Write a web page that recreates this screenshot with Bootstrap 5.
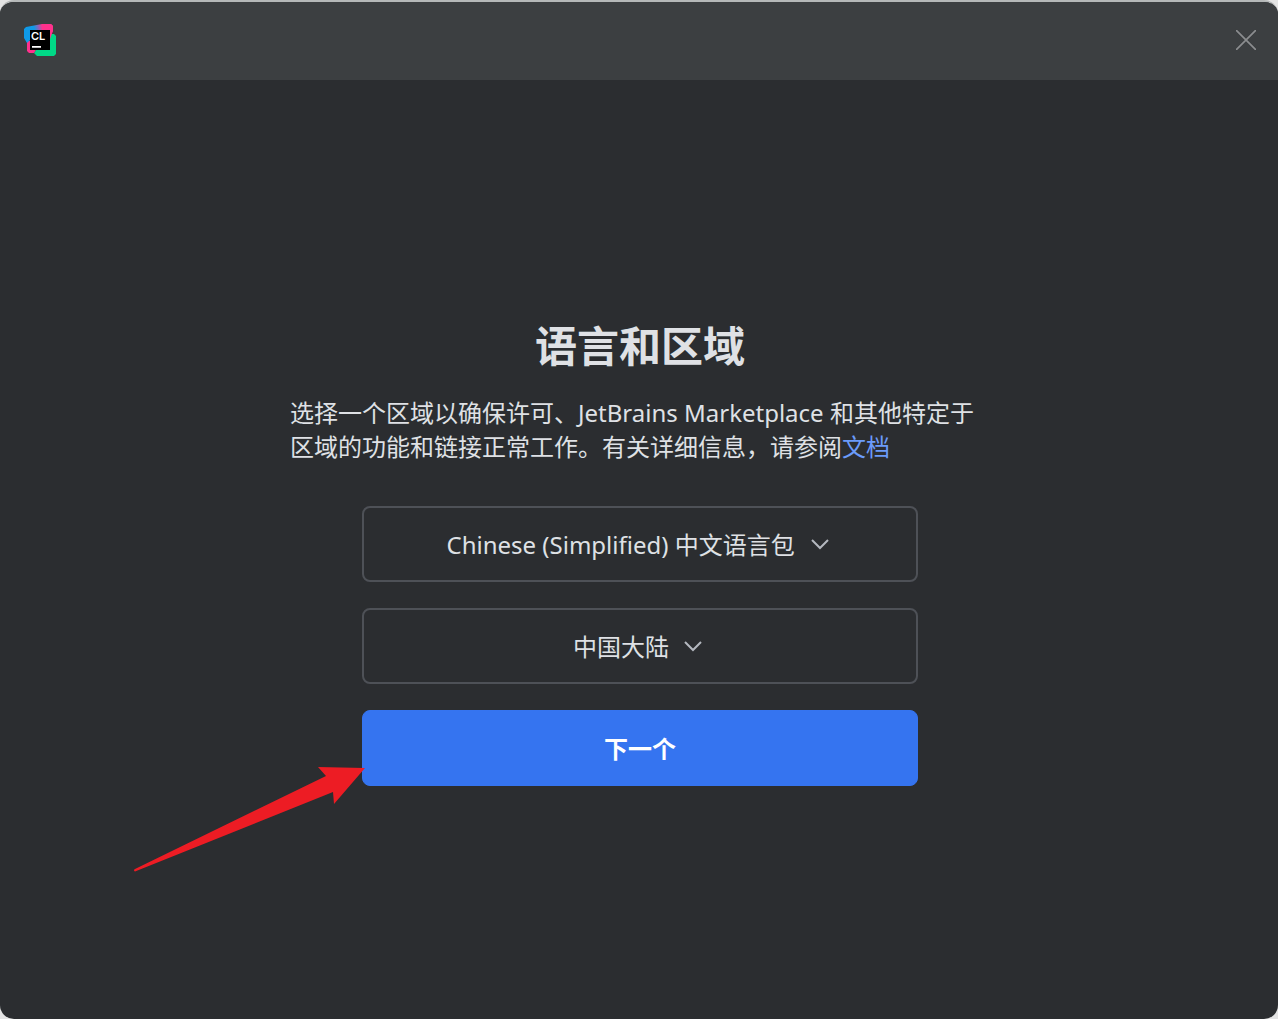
<!DOCTYPE html>
<html lang="zh-CN" data-bs-theme="dark">
<head>
<meta charset="utf-8">
<meta name="viewport" content="width=device-width, initial-scale=1">
<title>CLion</title>
<link href="https://cdn.jsdelivr.net/npm/bootstrap@5.3.0/dist/css/bootstrap.min.css" rel="stylesheet">
<style>
body { background: #e4e4e4; color: #dfe1e5; font-family: "Noto Sans", "Noto Sans CJK SC", sans-serif; font-size: 24px; }
.app-window { background: #2b2d30; border-top: 2px solid #b5b8b8; border-radius: 14px; }
.title-strip { background: #3c3f41; height: 78px; padding: 0 22px 2px 24px; }
.close-btn { color: #8b8d8f; line-height: 0; }
.logo-letters { font: 600 11px Inter, sans-serif; }
.welcome { padding-left: 2px; }
.page-title { font-size: 42px; line-height: 66px; margin-bottom: 17px; color: #dfe1e5; }
.intro-text { width: 100%; max-width: 700px; line-height: 34px; margin-bottom: 42px; }
.intro-text a { color: #6b9bfa; }
.choices { width: 100%; max-width: 556px; gap: 26px; }
.choice-box { height: 76px; border: 2px solid #4e5157; border-radius: 8px; }
.choice-box .form-select {
  color: #dfe1e5; font-size: 24px; height: 72px; padding: 2px 38px 0 0;
  background: transparent url("data:image/svg+xml,%3Csvg xmlns='http://www.w3.org/2000/svg' width='18' height='12' fill='none' stroke='%23b4b8bf' stroke-width='2'%3E%3Cpath d='M1 2l8 8 8-8'/%3E%3C/svg%3E") no-repeat right 5px center / 18px 12px;
}
.next-btn { height: 76px; border-radius: 8px; font-size: 24px; padding: 8px 0 6px; --bs-btn-bg: #3574f0; --bs-btn-border-color: #3574f0; }
.pointer-arrow { position: absolute; left: -228px; top: 56px; pointer-events: none; }
</style>
</head>
<body>
<div class="app-window d-flex flex-column min-vh-100 overflow-hidden">
  <header class="title-strip d-flex align-items-center justify-content-between">
    <svg width="32" height="32" viewBox="0 0 32 32" role="img" aria-label="CLion">
      <defs>
        <linearGradient id="bluePink" x1="0" y1="10" x2="24" y2="4" gradientUnits="userSpaceOnUse">
          <stop offset=".45" stop-color="#0f9ae8"/><stop offset=".8" stop-color="#ff318c"/>
        </linearGradient>
      </defs>
      <path fill="#00d886" d="M24 10h6l2 2v18l-2 2H13l-3-3 4-6z"/>
      <path fill="#ff318c" d="M3 17h10v7l-3 5H5l-2-2z"/>
      <path fill="url(#bluePink)" d="M0 5l2-2 16-3h9l2 2v5l-3 8H7l-4 4-3-5z"/>
      <path fill="#ff318c" d="M18 0h9l2 2v5l-3 4h-8z"/>
      <path d="M6 6h20v20H6z"/>
      <text class="logo-letters" x="7" y="16" fill="#fff">CL</text>
      <path fill="#fff" d="M8 22h9v1.700H8z"/>
    </svg>
    <button type="button" class="btn close-btn border-0 p-0" aria-label="关闭">
      <svg width="20" height="20" viewBox="0 0 20 20" fill="none" stroke="currentColor" stroke-width="1.700"><path d="M0 0l20 20M20 0L0 20"/></svg>
    </button>
  </header>
  <main class="welcome flex-grow-1 d-flex flex-column align-items-center justify-content-center">
    <h1 class="page-title fw-bold text-center">语言和区域</h1>
    <p class="intro-text">选择一个区域以确保许可、JetBrains Marketplace 和其他特定于<br>区域的功能和链接正常工作。有关详细信息，请参阅<a href="#" class="text-decoration-none">文档</a></p>
    <form class="choices d-flex flex-column">
      <div class="choice-box d-flex justify-content-center">
        <select class="form-select w-auto border-0 shadow-none" aria-label="语言"><option>Chinese (Simplified) 中文语言包</option></select>
      </div>
      <div class="choice-box d-flex justify-content-center">
        <select class="form-select w-auto border-0 shadow-none" aria-label="区域"><option>中国大陆</option></select>
      </div>
      <div class="position-relative">
        <button type="button" class="btn btn-primary next-btn w-100 fw-bold">下一个</button>
        <svg class="pointer-arrow" width="232" height="106" viewBox="0 0 232 106" aria-hidden="true"><path fill="#ed1c24" d="M231 2L184 1l8 9L1 103q-2 1 0 2.500L199 26l1 12z"/></svg>
      </div>
    </form>
  </main>
</div>
<script src="https://cdn.jsdelivr.net/npm/bootstrap@5.3.0/dist/js/bootstrap.bundle.min.js"></script>
</body>
</html>
